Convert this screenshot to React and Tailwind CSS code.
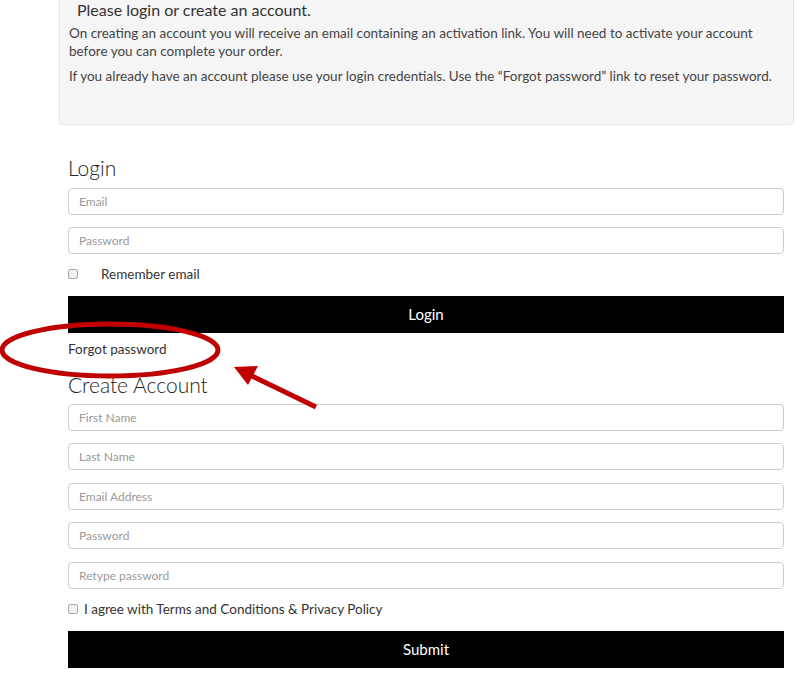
export default function App() {
  const inp = "h-[27px] w-full rounded border border-[#cccccc] bg-white px-[10px] text-[12px] text-[#999] flex items-center";
  return (
    <div className="relative w-[801px] h-[677px] bg-white overflow-hidden text-[#333]" style={{fontFamily: "Lato, 'Open Sans', sans-serif"}}>
      <div className="ml-[59px] w-[735px] h-[127px] -mt-[2px] bg-[#f5f5f5] border border-[#e3e3e3] rounded-b pl-[9px] pr-[8px]">
        <div className="pl-[8px] pt-[1px] text-[16px] leading-[20px] text-[#333]">Please login or create an account.</div>
        <p className="mt-[4px] text-[13.5px] leading-[18px] text-[#444]">On creating an account you will receive an email containing an activation link. You will need to activate your account before you can complete your order.</p>
        <p className="mt-[7px] text-[13.5px] leading-[18px] text-[#444]">If you already have an account please use your login credentials. Use the “Forgot password” link to reset your password.</p>
      </div>
      <div className="ml-[68px] w-[716px]">
        <div className="mt-[31px] text-[21px] leading-[24px] text-[#222] font-light">Login</div>
        <div className={inp + " mt-[8px]"}>Email</div>
        <div className={inp + " mt-[12px]"}>Password</div>
        <div className="mt-[12px] flex items-center h-[16px] text-[13.5px]">
          <span className="w-[10px] h-[10px] border border-[#aaa] rounded-[2px] bg-[#f0f0f0]"></span>
          <span className="ml-[23px]">Remember email</span>
        </div>
        <div className="mt-[14px] h-[37px] bg-black text-white text-[15px] flex items-center justify-center">Login</div>
        <div className="mt-[7px] text-[13.5px] leading-[18px]">Forgot password</div>
        <div className="mt-[15px] text-[21px] leading-[24px] text-[#222] font-light">Create Account</div>
        <div className={inp + " mt-[7px]"}>First Name</div>
        <div className={inp + " mt-[12px]"}>Last Name</div>
        <div className={inp + " mt-[13px]"}>Email Address</div>
        <div className={inp + " mt-[12px]"}>Password</div>
        <div className={inp + " mt-[13px]"}>Retype password</div>
        <div className="mt-[12px] flex items-center h-[16px] text-[13.5px]">
          <span className="w-[10px] h-[10px] border border-[#aaa] rounded-[2px] bg-[#f0f0f0]"></span>
          <span className="ml-[6px]">I agree with Terms and Conditions &amp; Privacy Policy</span>
        </div>
        <div className="mt-[14px] h-[37px] bg-black text-white text-[15px] flex items-center justify-center">Submit</div>
      </div>
      <svg className="absolute left-0 top-0 pointer-events-none" width="801" height="677">
        <ellipse cx="110" cy="350" rx="108" ry="26" fill="none" stroke="#c00000" strokeWidth="5" />
        <line x1="316" y1="407" x2="250" y2="375" stroke="#c00000" strokeWidth="5" />
        <polygon points="234,367 258,366 248,385" fill="#c00000" />
      </svg>
    </div>
  );
}
